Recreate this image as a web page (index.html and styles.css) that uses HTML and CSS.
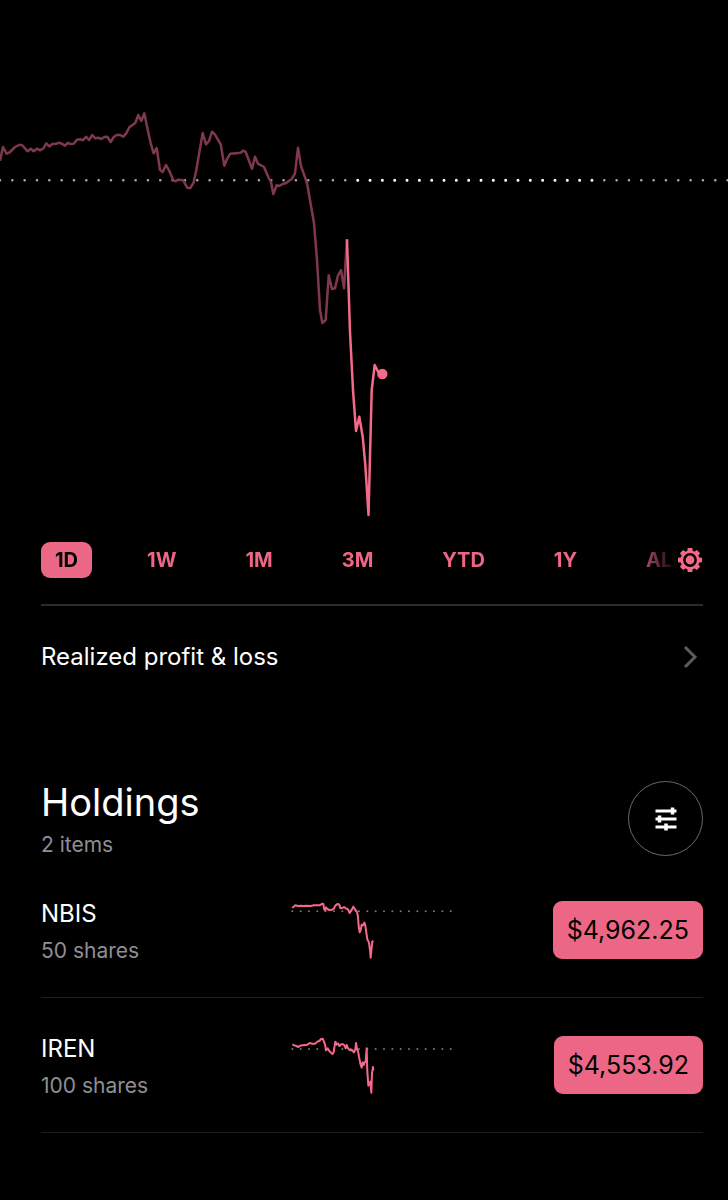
FILE: index.html
```html
<!doctype html>
<html lang="en">
<head>
<meta charset="utf-8">
<meta name="viewport" content="width=device-width, initial-scale=1">
<title>Portfolio</title>
<link rel="stylesheet" href="styles.css">
</head>
<body>
  <main>
    <svg class="chart" viewBox="0 0 728 528" role="img" aria-label="Portfolio value today">
      <path class="baseline" d="M0 180.3H348"/>
      <path class="baseline baseline-bright" d="M357.7 180.3H595"/>
      <path class="baseline" d="M604.3 180.3H728"/>
      <polyline class="line line-past" points="0,160.7 3,147 6.5,153.7 9.5,152.5 15,147 19,145 22,145 27.7,151.3 30.7,148.7 33.7,151.3 37,148.7 40,150.3 43.3,148.5 46.3,143.3 49.3,146.5 52.3,144 56,143.7 59,142.7 62,143.7 65,145.7 67.7,143 70.7,144 73.7,143.7 77,139.7 80,139.3 83,140.3 86,136.7 89,140 92.3,135 95.3,138.3 98.3,137.7 101.3,139 104.3,137 107.3,136.7 110.7,142 113.7,137 116.7,135 120,135 123.3,136.7 126.3,133.3 129.3,127.3 135.3,123 138.3,115 141.3,121 144.3,113.3 147.7,129.7 150.7,143.3 153.7,153.3 156.7,148 160,170 162.7,172 166,165 169,170.3 173.3,180 175.3,181.3 178.3,179.7 183.3,180.3 187.3,188 190.3,188 193.7,182.3 196.3,170 202.7,133 206,144.3 209,141 212,131.7 215,134.7 220.7,144.3 224.3,165.7 227,159 230.3,153.7 240.7,152.7 243,150.7 245.7,152 252,168.7 255,156.7 258,163.7 264,167 268.7,178 271,182 273.3,194 276.7,185.3 279.3,186 282.7,184 285.7,183.3 292,178.7 295,173.3 298,147.7 301,166 307,183 314,223 317,260 320,310 322.3,323 325.7,320 328.7,275.3 332,289 335,288.3 338,275.3 341,270.3 344,288.3 347,239.3"/>
      <polyline class="line" points="347,239.3 350,331.7 353,390 356,431 359.3,416.7 362.7,436.7 365.3,465 368.5,515 371.7,390 374.7,365 378,371.7 382.3,374"/>
      <circle class="dot" cx="382.3" cy="374" r="5.2"/>
    </svg>

    <div class="content">
      <div class="toolbar">
        <nav class="ranges" aria-label="Time range">
          <button class="range active">1D</button>
          <button class="range">1W</button>
          <button class="range">1M</button>
          <button class="range">3M</button>
          <button class="range">YTD</button>
          <button class="range">1Y</button>
          <button class="range">ALL</button>
        </nav>
        <button class="settings" aria-label="Chart settings">
          <svg width="26" height="26" viewBox="-13 -13 26 26">
            <g class="teeth">
              <path id="tooth" d="M-2.8 -8L-2.3 -12H2.3L2.8 -8Z"/>
              <use href="#tooth" transform="rotate(45)"/>
              <use href="#tooth" transform="rotate(90)"/>
              <use href="#tooth" transform="rotate(135)"/>
              <use href="#tooth" transform="rotate(180)"/>
              <use href="#tooth" transform="rotate(225)"/>
              <use href="#tooth" transform="rotate(270)"/>
              <use href="#tooth" transform="rotate(315)"/>
            </g>
            <circle class="ring" r="8.2"/>
            <circle class="dot" r="4.4"/>
          </svg>
        </button>
      </div>

      <a class="link-row" href="#realized">
        <span>Realized profit &amp; loss</span>
        <svg width="26" height="26" viewBox="0 0 26 26" aria-hidden="true"><path class="chevron" d="M8 3L18 13L8 23"/></svg>
      </a>

      <header class="section-head">
        <div>
          <h1>Holdings</h1>
          <p class="sub">2 items</p>
        </div>
        <button class="filter" aria-label="Display options">
          <svg width="24" height="24" viewBox="0 0 24 24">
            <path class="sliders" d="M1.5 4H22.5M1.5 12H22.5M1.5 20H22.5"/>
            <path class="knobs" d="M18.5 .5V7.500M5.500 8.500V15.500M12 16.500V23.500"/>
          </svg>
        </button>
      </header>

      <ul class="holdings">
        <li class="holding">
          <div class="position">
            <h2>NBIS</h2>
            <p class="sub">50 shares</p>
          </div>
          <svg class="spark" viewBox="30 30 492 180" aria-hidden="true">
            <path class="spark-base" d="M37 64H518"/>
            <polyline class="spark-line" points="37,54 41,50 46,46 54,48 62,47 70,48 80,47 92,48 102,46 112,46 120,46 126,41 130,42 132,56 135,61 138,52 142,57 148,60 156,59 162,56 165,48 171,43 175,42 179,46 181,55 187,54 192,51 198,55 204,58 209,69 213,62 216,58 220,50 226,60 231,66 234,80 236,108 239,127 242,120 245,104 249,106 253,98 256,106 259,128 262,148 267,158 270,180 272,203 275,170 277,155 280,152"/>
          </svg>
          <button class="price">$4,962.25</button>
        </li>
        <li class="holding">
          <div class="position">
            <h2>IREN</h2>
            <p class="sub">100 shares</p>
          </div>
          <svg class="spark" viewBox="30 30 492 180" aria-hidden="true">
            <path class="spark-base" d="M37 72H518"/>
            <polyline class="spark-line" points="37,58 43,61 49,63 55,66 61,62 68,61 75,60 82,59 89,54 97,56 106,56 112,50 118,48 123,42 128,41 132,50 136,62 138,76 143,70 148,78 153,83 157,87 161,82 163,68 166,50 170,59 174,55 178,63 183,58 190,58 194,62 197,70 200,60 204,70 210,76 216,75 222,82 226,74 228,54 231,72 234,78 237,95 241,115 245,128 248,112 251,120 254,112 257,110 260,70 262,140 265,182 268,176 271,170 274,203 276,145 279,126 280,136"/>
          </svg>
          <button class="price">$4,553.92</button>
        </li>
      </ul>
    </div>
  </main>
</body>
</html>
```
FILE: styles.css
```css
* {
  box-sizing: border-box;
}

body {
  margin: 0;
  background-color: #000;
  color: #fff;
  font-family: Inter, "Liberation Sans", sans-serif;
  font-size: 24px;
  line-height: 32px;
}

h1,
h2,
p,
ul {
  margin: 0;
  padding: 0;
  font-weight: 400;
}

button {
  padding: 0;
  border: none;
  background: none;
  color: #ec6786;
  font: inherit;
  cursor: pointer;
}

svg {
  display: block;
  fill: none;
}

/* main chart */
.chart {
  width: 100%;
  height: auto;
}

.baseline {
  stroke: #aaa;
  stroke-width: 2.6;
  stroke-linecap: round;
  stroke-dasharray: 0 12.33;
}

.baseline-bright {
  stroke: #fff;
  stroke-width: 3;
}

.line {
  stroke: #f5698a;
  stroke-width: 2.5;
  stroke-linejoin: round;
}

.line-past {
  stroke: #7f394b;
}

.dot {
  fill: #f5698a;
}

.content {
  padding: 0 25px 0 41px;
}

/* time ranges */
.toolbar {
  display: flex;
  align-items: center;
  height: 78px;
  padding-bottom: 13px;
  border-bottom: 2px solid #2c2c2e;
}

/* the last range fades out under the settings button */
.ranges {
  display: flex;
  flex: 1;
  gap: 41px;
  min-width: 0;
  -webkit-mask-image: linear-gradient(to left, transparent, #000 44px);
  mask-image: linear-gradient(to left, transparent, #000 44px);
}

.range {
  flex: none;
  height: 36px;
  padding: 0 14px;
  border-radius: 9px;
  font-size: 20px;
  font-weight: 700;
}

.range.active {
  background-color: #ec6786;
  color: #000;
}

.settings {
  flex: none;
}

.teeth {
  fill: #f5698a;
}

.ring {
  stroke: #f5698a;
  stroke-width: 2.6;
  fill: #000;
}

/* realized profit link */
.link-row {
  display: flex;
  align-items: center;
  justify-content: space-between;
  height: 102px;
  color: #fff;
  text-decoration: none;
}

.chevron {
  stroke: #5c5c5e;
  stroke-width: 3;
}

/* holdings */
.section-head {
  display: flex;
  align-items: flex-start;
  justify-content: space-between;
  padding-top: 69px;
}

h1 {
  font-size: 38px;
  line-height: 50px;
}

.sub {
  color: #8e8f94;
  font-size: 21px;
  line-height: 36px;
}

.filter {
  display: flex;
  align-items: center;
  justify-content: center;
  width: 75px;
  height: 75px;
  margin-top: 4px;
  border: 1px solid #6a6a6c;
  border-radius: 50%;
}

.sliders {
  stroke: #fff;
  stroke-width: 3;
}

.knobs {
  stroke: #fff;
  stroke-width: 3.5;
}

.holdings {
  list-style: none;
}

.holding {
  display: grid;
  grid-template-columns: 1fr 164px 1fr;
  align-items: center;
  height: 135px;
  border-bottom: 1px solid #1e1e20;
}

.position {
  padding-top: 4px;
}

h2 {
  font-size: 24px;
  line-height: 38px;
}

.spark-base {
  stroke: #777;
  stroke-width: 6;
  stroke-linecap: round;
  stroke-dasharray: 0 25;
}

.spark-line {
  stroke: #f5698a;
  stroke-width: 6;
  stroke-linejoin: round;
}

.price {
  justify-self: end;
  height: 58px;
  padding: 0 14px;
  border-radius: 9px;
  background-color: #ec6786;
  color: #000;
  font-size: 25px;
}
```
